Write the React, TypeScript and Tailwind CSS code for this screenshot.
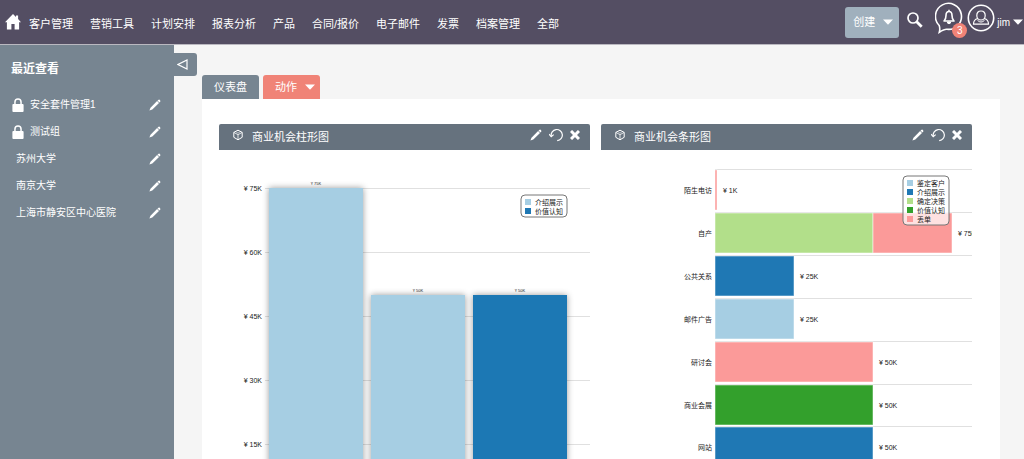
import React from "react";

const navItems = [
  "客户管理",
  "营销工具",
  "计划安排",
  "报表分析",
  "产品",
  "合同/报价",
  "电子邮件",
  "发票",
  "档案管理",
  "全部",
];

const recentItems = [
  { name: "安全套件管理1", locked: true },
  { name: "测试组", locked: true },
  { name: "苏州大学", locked: false },
  { name: "南京大学", locked: false },
  { name: "上海市静安区中心医院", locked: false },
];

const columnTicks = [
  { label: "¥ 75K", y: 38 },
  { label: "¥ 60K", y: 102 },
  { label: "¥ 45K", y: 166 },
  { label: "¥ 30K", y: 230 },
  { label: "¥ 15K", y: 294 },
];

const columns = [
  { label: "¥ 75K", x: 50, y: 38, color: "#a6cee3" },
  { label: "¥ 50K", x: 152, y: 145, color: "#a6cee3" },
  { label: "¥ 50K", x: 254, y: 145, color: "#1f78b4" },
];

const rows = [
  { name: "陌生电访", label: "¥ 1K", bars: [{ width: 2, color: "#fb9a99" }] },
  {
    name: "自产",
    label: "¥ 75K",
    bars: [
      { width: 158, color: "#b2df8a" },
      { width: 79, color: "#fb9a99" },
    ],
  },
  { name: "公共关系", label: "¥ 25K", bars: [{ width: 79, color: "#1f78b4" }] },
  { name: "邮件广告", label: "¥ 25K", bars: [{ width: 79, color: "#a6cee3" }] },
  { name: "研讨会", label: "¥ 50K", bars: [{ width: 158, color: "#fb9a99" }] },
  { name: "商业会展", label: "¥ 50K", bars: [{ width: 158, color: "#33a02c" }] },
  { name: "网站", label: "¥ 50K", bars: [{ width: 158, color: "#1f78b4" }] },
];

const columnLegend = [
  { name: "介绍展示", color: "#a6cee3" },
  { name: "价值认知", color: "#1f78b4" },
];

const rowLegend = [
  { name: "鉴定客户", color: "#a6cee3" },
  { name: "介绍展示", color: "#1f78b4" },
  { name: "确定决策", color: "#b2df8a" },
  { name: "价值认知", color: "#33a02c" },
  { name: "丢单", color: "#fb9a99" },
];

const Pencil = () => (
  <svg viewBox="0 0 12 12" className="size-3" fill="currentColor">
    <path d="M9.300.9q.7-.7 1.300-.1l.6.6q.6.600-.1 1.300L10.400 3.500 8.500 1.600zM8.100 2 10 3.900 3.300 10.400.4 11.600 1.500 8.700z" />
  </svg>
);

const Caret = () => (
  <svg viewBox="0 0 10 6" className="h-[6px] w-[10px]" fill="currentColor">
    <path d="M0 0.500h10L5 5.800z" />
  </svg>
);

const Lock = () => (
  <svg viewBox="0 0 12 14" className="h-[14px] w-3" fill="currentColor">
    <path
      fillRule="evenodd"
      d="M2.200 6V4a3.800 3.800 0 0 1 7.600 0V6h.9q.9 0 .9.900v6.100q0 .9-.9.900H1.300q-.9 0-.9-.9V6.900q0-.9.900-.9zm1.500 0h4.600V4a2.300 2.300 0 0 0-4.600 0z"
    />
  </svg>
);

const Cube = () => (
  <svg
    viewBox="0 0 12 12"
    className="size-3"
    fill="none"
    stroke="currentColor"
    strokeLinejoin="round"
  >
    <path d="M6 1.200 10.200 3.400v4.900L6 10.800 1.800 8.300V3.400z" />
    <path d="M1.800 3.400 6 5.700l4.200-2.300M6 5.700v5" strokeWidth=".8" />
    <path d="M4.400 3.200 6 4.100l1.600-.9" strokeWidth=".6" />
  </svg>
);

const Header = () => {
  return (
    <header className="flex h-[45px] shrink-0 items-center justify-between border-b border-[#bab8c0] bg-[#544e63] text-white">
      <nav className="flex items-center gap-[17px] pl-[5px] text-[11px]">
        <a href="#home" aria-label="首页" className="-mr-[9px]">
          <svg viewBox="0 0 16 16" className="size-4" fill="currentColor">
            <path d="M8 0 11 3V1.600h2.100v3.500L16 8.200h-1.900V15.500H9.600V10H6.400v5.500H1.900V8.200H0z" />
          </svg>
        </a>
        {navItems.map((item) => (
          <a key={item} href="#module" className="whitespace-nowrap pt-1">
            {item}
          </a>
        ))}
      </nav>

      <div className="flex items-center">
        <button className="mr-2 flex h-[31px] w-[54px] items-center gap-2 rounded-[3px] bg-[#a0b0bd] pl-2 text-[11px]">
          创建
          <Caret />
        </button>
        <button aria-label="搜索" className="mr-3 -mt-1">
          <svg viewBox="0 0 16 16" className="size-4" fill="none" stroke="currentColor">
            <circle cx="6" cy="6" r="5" strokeWidth="1.700" />
            <path d="m9.700 9.700 5 5" strokeWidth="2.800" />
          </svg>
        </button>
        <button aria-label="通知" className="relative mr-1 -mt-2">
          <svg viewBox="0 0 28 32" className="h-8 w-7" fill="none" stroke="currentColor">
            <path
              d="M4.200 23.500A13 13 0 1 1 12 27.300Q9.500 27 4.300 30.200q1-3.500-.1-6.700z"
              strokeWidth="1.600"
            />
            <path
              d="M9 19q2-1.600 2-5.500 0-4 3-4t3 4q0 3.900 2 5.500zM14 9.500V7.800"
              strokeWidth="1.600"
              strokeLinejoin="round"
            />
            <path d="M12.300 20a1.700 1.700 0 0 0 3.400 0z" fill="currentColor" />
          </svg>
          <span className="absolute -right-1 -bottom-1 flex size-[15px] items-center justify-center rounded-full bg-[#f08377] text-[10px] leading-none">
            3
          </span>
        </button>
        <button className="flex items-center text-[10px]">
          <svg
            viewBox="0 0 28 28"
            className="mr-[2px] mb-[9px] size-7"
            fill="none"
            stroke="currentColor"
          >
            <circle cx="14" cy="14" r="12.700" strokeWidth="1.600" />
            <path
              d="M14 7c-3 0-4.200 2-4.200 4.400S11.500 16 14 16s4.200-2.200 4.200-4.600S17 7 14 7zM10.700 14.500q-4.200 1-4.200 5.700h15q0-4.700-4.200-5.700"
              strokeWidth="1.200"
            />
            <path d="M10.500 16.300q3.500 3.500 7 0" />
          </svg>
          jim
          <span className="mr-px ml-[3px]">
            <Caret />
          </span>
        </button>
      </div>
    </header>
  );
};

const Sidebar = () => {
  return (
    <aside className="w-[174px] shrink-0 bg-[#778591] text-white">
      <h2 className="px-[11px] pt-4 text-[12px] leading-4 font-bold">最近查看</h2>
      <ul className="mt-[14px] text-[10px]">
        {recentItems.map((item) => (
          <li
            key={item.name}
            className="flex h-[27px] items-center justify-between pr-[13px] pl-3"
          >
            <a href="#record" className="flex items-center gap-[6px]">
              {item.locked ? <Lock /> : null}
              <span className={item.locked ? "" : "pl-1"}>{item.name}</span>
            </a>
            <button aria-label={`编辑 ${item.name}`}>
              <Pencil />
            </button>
          </li>
        ))}
      </ul>
    </aside>
  );
};

type LegendProps = {
  items: { name: string; color: string }[];
  x: number;
  y: number;
};

const Legend = ({ items, x, y }: LegendProps) => (
  <g transform={`translate(${x} ${y})`}>
    <rect
      width="46"
      height={items.length * 9 + 4}
      rx="4"
      fill="#fff"
      fillOpacity=".7"
      stroke="#777"
    />
    {items.map((item, i) => (
      <g key={item.name}>
        <rect x="4" y={i * 9 + 4} width="6" height="6" fill={item.color} />
        <text x="14" y={i * 9 + 10} fontSize="7">
          {item.name}
        </text>
      </g>
    ))}
  </g>
);

const ColumnChart = () => {
  return (
    <svg viewBox="0 0 371 372" className="block w-full" fill="#222">
      <defs>
        <filter id="shadow" x="-10%" y="-10%" width="120%" height="120%">
          <feDropShadow dx="0" dy="0" stdDeviation="3" floodColor="#000" floodOpacity=".4" />
        </filter>
      </defs>
      {columnTicks.map((tick) => (
        <g key={tick.label}>
          <path d={`M46 ${tick.y + 0.5}H371`} stroke="#e0e0e0" />
          <text x="43" y={tick.y + 3} fontSize="7" textAnchor="end">
            {tick.label}
          </text>
        </g>
      ))}
      {columns.map((col) => (
        <g key={col.x}>
          <rect
            x={col.x}
            y={col.y}
            width="94"
            height={358 - col.y}
            fill={col.color}
            filter="url(#shadow)"
          />
          <text x={col.x + 47} y={col.y - 3} fontSize="4" textAnchor="middle">
            {col.label}
          </text>
        </g>
      ))}
      <Legend items={columnLegend} x={302} y={45} />
    </svg>
  );
};

const RowChart = () => {
  return (
    <svg viewBox="0 0 371 372" className="block w-full" fill="#222">
      {rows.map((row, i) => {
        const top = Math.round(i * 42.9) + 19;
        const total = row.bars.reduce((sum, bar) => sum + bar.width, 0);
        return (
          <g key={row.name}>
            <path d={`M114 ${top + 0.5}H371`} stroke="#e0e0e0" />
            <text x="111" y={top + 24} fontSize="7" textAnchor="end">
              {row.name}
            </text>
            {row.bars.map((bar, n) => (
              <rect
                key={bar.color}
                x={114 + (n === 0 ? 0 : row.bars[0].width)}
                y={top + 1}
                width={bar.width}
                height="40"
                fill={bar.color}
                stroke="#fff"
                strokeOpacity=".5"
              />
            ))}
            <text x={114 + total + 6} y={top + 24} fontSize="7">
              {row.label}
            </text>
          </g>
        );
      })}
      <Legend items={rowLegend} x={302} y={26} />
    </svg>
  );
};

type DashletProps = {
  title: string;
  children: React.ReactNode;
};

const Dashlet = ({ title, children }: DashletProps) => (
  <article className="min-w-0">
    <div className="flex h-[26px] items-center justify-between rounded-t-[2px] bg-[#66727e] pr-[10px] pl-[13px] text-white">
      <div className="flex items-center gap-2">
        <span className="-mt-1">
          <Cube />
        </span>
        <h3 className="text-[11px]">{title}</h3>
      </div>
      <div className="-mt-1 flex items-center gap-[7px]">
        <button aria-label="编辑">
          <Pencil />
        </button>
        <button aria-label="刷新">
          <svg viewBox="0 0 14 14" className="size-[14px]" fill="none" stroke="currentColor">
            <path d="M2.200 8A5.600 5.600 0 1 1 8.200 12.700" strokeWidth="1.200" />
            <path d="M0 6.200 2.200 8.600 4.700 6.600" strokeWidth="1.200" />
          </svg>
        </button>
        <button aria-label="关闭">
          <svg viewBox="0 0 10 10" className="size-[10px]" stroke="currentColor">
            <path d="m1 1 8 8M9 1 1 9" strokeWidth="3" />
          </svg>
        </button>
      </div>
    </div>
    {children}
  </article>
);

const App = () => {
  return (
    <div className="flex h-screen flex-col overflow-hidden bg-[#f5f5f5] font-['Liberation_Sans','Noto_Sans_CJK_SC',sans-serif]">
      <Header />
      <div className="flex min-h-0 flex-1">
        <Sidebar />
        <button
          aria-label="收起侧栏"
          className="mt-2 flex h-[23px] w-[23px] shrink-0 items-center justify-center rounded-r-[3px] bg-[#778591] pr-[6px] text-white"
        >
          <svg viewBox="0 0 11 11" className="size-[11px]" fill="none" stroke="currentColor">
            <path d="M10 1v9L1 5.500z" strokeWidth="1.200" />
          </svg>
        </button>
        <main className="flex min-w-0 flex-1 flex-col pt-[30px] pr-6 pl-[5px]">
          <div className="flex gap-1 text-[11px] text-white">
            <button className="h-6 rounded-t-[3px] bg-[#778591] px-3">仪表盘</button>
            <button className="flex h-6 items-center gap-2 rounded-t-[3px] bg-[#f08377] pr-[5px] pl-3">
              动作
              <Caret />
            </button>
          </div>
          <section className="grid flex-1 grid-cols-2 items-start gap-[11px] bg-white pt-[25px] pr-7 pl-[17px]">
            <Dashlet title="商业机会柱形图">
              <ColumnChart />
            </Dashlet>
            <Dashlet title="商业机会条形图">
              <RowChart />
            </Dashlet>
          </section>
        </main>
      </div>
    </div>
  );
};

export default App;
